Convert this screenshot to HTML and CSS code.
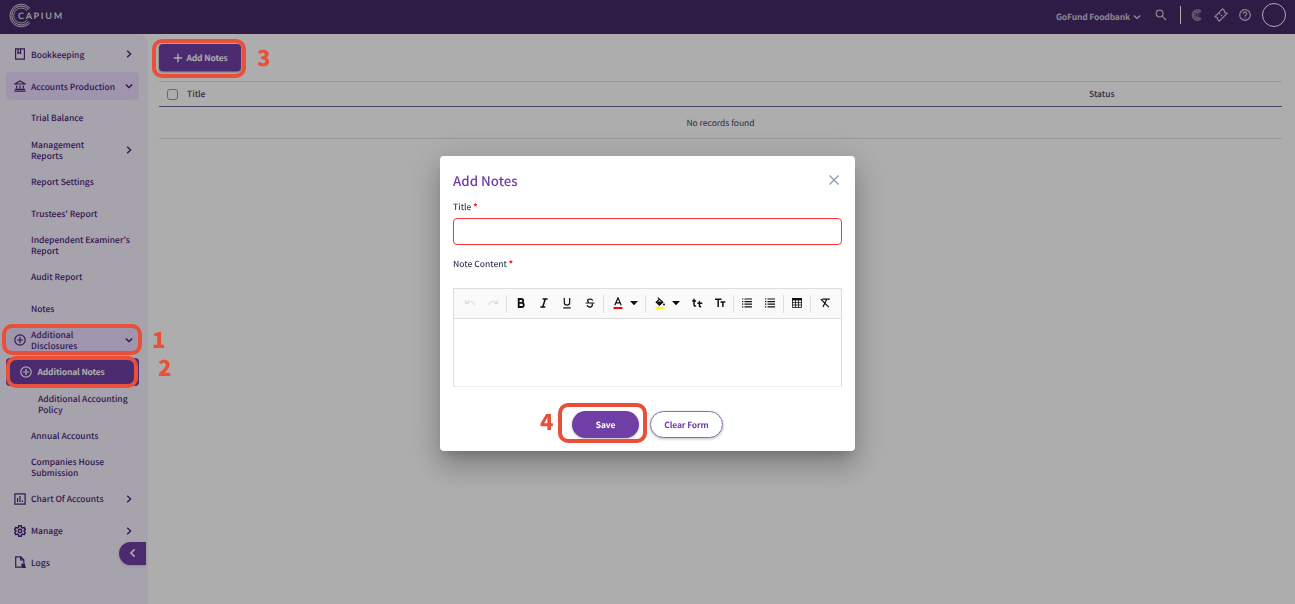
FILE: index.html
```html
<!DOCTYPE html>
<html lang="en">
<head>
    <meta charset="UTF-8">
    <title>Capium - Additional Notes</title>
    <link rel="stylesheet" href="styles.css">
</head>
<body>
    <svg class="defs" width="0" height="0">
        <symbol id="right" viewBox="0 0 10 10"><path d="M3.2 1.8 6.6 5 3.2 8.2"/></symbol>
        <symbol id="down" viewBox="0 0 10 10"><path d="M1.8 3.4 5 6.6 8.2 3.4"/></symbol>
        <symbol id="plus-circle" viewBox="0 0 12 12"><circle cx="6" cy="6" r="5.2"/><path d="M6 3v6M3 6h6"/></symbol>
        <symbol id="caret" viewBox="0 0 10 10"><path d="M1 3h8L5 7.2z"/></symbol>
        <symbol id="list" viewBox="0 0 12 12"><path d="M3.5 2h7.5M3.5 4.6h7.5M3.5 7.2h7.5M3.5 9.8h7.5M1 2h1.3M1 4.6h1.3M1 7.2h1.3M1 9.8h1.3"/></symbol>
    </svg>

    <header class="topbar">
        <div class="logo">
            <svg class="logo-mark" viewBox="0 0 26 26">
                <path d="M21.5 5.2A11.7 11.7 0 1 0 21.5 20.8"/>
                <path d="M20.2 6.7A9.8 9.8 0 1 0 20.2 19.3"/>
                <path d="M18.8 8.2A7.8 7.8 0 1 0 18.8 17.8"/>
                <path class="dotted" d="M20.8 6A10.7 10.7 0 1 0 20.8 20"/>
            </svg>
            <span class="logo-text">CAPIUM</span>
        </div>
        <div class="top-actions">
            <span class="company">GoFund Foodbank</span>
            <svg class="icon company-arrow"><use href="#down"/></svg>
            <svg class="icon search" viewBox="0 0 12 12"><circle cx="4.6" cy="4.6" r="3.4"/><path d="M7.2 7.2 11 11"/></svg>
            <span class="divider"></span>
            <svg class="icon brand" viewBox="0 0 12 12"><path d="M10.4 2.4A5.3 5.3 0 1 0 10.4 9.6"/><path d="M9.4 3.6A3.9 3.9 0 1 0 9.4 8.4"/><path d="M8 4.4A2.3 2.3 0 1 0 8 7.6M6 6h2"/></svg>
            <svg class="icon ticket" viewBox="0 0 14 14"><path d="M8.7.9 10.6 2.8A1.4 1.4 0 0 0 11.5 4.9L13.1 5.3 5.3 13.1 3.4 11.2A1.4 1.4 0 0 0 2.5 9.1L.9 8.7z"/><path d="M5.3 5.3 8.7 8.7" stroke-dasharray="1.4 1"/></svg>
            <svg class="icon help" viewBox="0 0 12 12"><circle cx="6" cy="6" r="5.3"/><path d="M4.3 4.7a1.7 1.7 0 1 1 2.6 1.4C6.2 6.5 6 6.8 6 7.4M6 8.4v1.1"/></svg>
            <span class="avatar"></span>
        </div>
    </header>

    <div class="page">
        <nav class="sidebar">
            <a class="item"><svg class="icon" viewBox="0 0 12 12"><path d="M1.6.9h8.8v10.2H1.6zM4 1v4.4l1.3-1 1.3 1V1"/></svg><span>Bookkeeping</span><svg class="arrow"><use href="#right"/></svg></a>
            <a class="item open"><svg class="icon" viewBox="0 0 12 12"><path d="M.8 4 6 1l5.2 3zM.4 11.2h11.2M.9 9.4h10.2M2.7 5.4v3M6 5.4v3M9.3 5.4v3"/></svg><span>Accounts Production</span><svg class="arrow"><use href="#down"/></svg></a>
            <a class="item sub"><span>Trial Balance</span></a>
            <a class="item sub"><span>Management<br>Reports</span><svg class="arrow"><use href="#right"/></svg></a>
            <a class="item sub"><span>Report Settings</span></a>
            <a class="item sub"><span>Trustees' Report</span></a>
            <a class="item sub"><span>Independent Examiner's<br>Report</span></a>
            <a class="item sub"><span>Audit Report</span></a>
            <a class="item sub"><span>Notes</span></a>
            <a class="item open"><svg class="icon"><use href="#plus-circle"/></svg><span>Additional<br>Disclosures</span><svg class="arrow"><use href="#down"/></svg></a>
            <a class="item selected"><svg class="icon"><use href="#plus-circle"/></svg><span>Additional Notes</span></a>
            <a class="item subsub"><span>Additional Accounting<br>Policy</span></a>
            <a class="item sub"><span>Annual Accounts</span></a>
            <a class="item sub"><span>Companies House<br>Submission</span></a>
            <a class="item"><svg class="icon" viewBox="0 0 12 12"><path d="M.9.9h10.2v10.2H.9zM3.6 5v4M6 3v6M8.4 7.4V9"/></svg><span>Chart Of Accounts</span><svg class="arrow"><use href="#right"/></svg></a>
            <a class="item"><svg class="icon gear" viewBox="0 0 12 12"><path d="M4.8.8h2.4l.4 1.6 1 .6 1.6-.5 1.2 2-1.2 1.1v.9l1.2 1.1-1.2 2-1.6-.5-1 .6-.4 1.6H4.8l-.4-1.6-1-.6-1.6.5-1.2-2 1.2-1.1v-.9L.6 4.5l1.2-2 1.6.5 1-.6z"/><circle cx="6" cy="6" r="1.7"/></svg><span>Manage</span><svg class="arrow"><use href="#right"/></svg></a>
            <a class="item"><svg class="icon" viewBox="0 0 12 12"><path d="M7 11.2H1.7V.8H6.8L9.8 3.8V7M6.6 1v3h3"/><path class="solid" d="M8 8h2.5v2.2l1.3 1.5H8z"/></svg><span>Logs</span></a>
            <button class="collapse"><svg viewBox="0 0 10 10"><path d="M6.6 1.4 3 5l3.6 3.6"/></svg></button>
        </nav>

        <main class="content">
            <button class="add-notes"><svg viewBox="0 0 10 10"><path d="M5 .8v8.4M.8 5h8.4"/></svg><span>Add Notes</span></button>
            <table class="notes">
                <thead>
                    <tr><th class="check"><span class="checkbox"></span></th><th>Title</th><th class="status">Status</th></tr>
                </thead>
                <tbody>
                    <tr><td colspan="3">No records found</td></tr>
                </tbody>
            </table>
        </main>
    </div>

    <div class="overlay">
        <form class="modal">
            <div class="modal-head">
                <h2>Add Notes</h2>
                <svg class="close" viewBox="0 0 12 12"><path d="M1.5 1.5l9 9M10.5 1.5l-9 9"/></svg>
            </div>
            <label>Title <b>*</b></label>
            <input class="title-input" type="text">
            <label>Note Content <b>*</b></label>
            <div class="editor">
                <div class="toolbar">
                    <div class="group">
                        <span class="tool off"><svg viewBox="0 0 12 12"><path d="M1.5 3v3.5H5M1.8 6.2C4 3.8 8.5 3.5 10.8 8"/></svg></span>
                        <span class="tool off"><svg viewBox="0 0 12 12"><path d="M10.5 3v3.5H7M10.2 6.2C8 3.8 3.5 3.5 1.2 8"/></svg></span>
                    </div>
                    <div class="group">
                        <span class="tool"><svg viewBox="0 0 12 12"><path stroke-width="1.8" d="M3.7 2h2.6a1.9 1.9 0 0 1 0 3.8H3.7zM3.7 5.8h3a2.1 2.1 0 0 1 0 4.2h-3z"/></svg></span>
                        <span class="tool"><svg viewBox="0 0 12 12"><path stroke-width="1.5" d="M4.6 2h5M2.3 10h5M7.3 2 4.7 10"/></svg></span>
                        <span class="tool"><svg viewBox="0 0 12 12"><path d="M3.3 1v4.4a2.7 2.7 0 0 0 5.4 0V1M2.3 10.8h7.4"/></svg></span>
                        <span class="tool"><svg viewBox="0 0 12 12"><path d="M8.8 3.6C8 1.5 3.6 1.5 3.6 3.8c0 .8.6 1.3 1.4 1.7M1.5 6h9M7.7 6.8c1.8 1-.1 3.3-1.7 3.3-1.5 0-2.6-.7-2.8-1.9"/></svg></span>
                    </div>
                    <div class="group">
                        <span class="tool color"><svg viewBox="0 0 12 12"><path d="M2.8 8.2 6 .8l3.2 7.4M3.9 5.8h4.2"/><path stroke="#f00" stroke-width="2" d="M1.5 11h9"/></svg></span>
                        <span class="drop"><svg><use href="#caret"/></svg></span>
                    </div>
                    <div class="group">
                        <span class="tool color"><svg viewBox="0 0 12 12"><path d="M3.8.6 8.8 5.2 5.5 8.2 2.2 5.2 5.5 2.2"/><path class="solid" stroke="none" d="M2.2 4.6h6.6L5.5 8.5z"/><circle class="solid" stroke="none" cx="10" cy="7.5" r="1"/><path stroke="#ff0" stroke-width="2" d="M1.5 11h9"/></svg></span>
                        <span class="drop"><svg><use href="#caret"/></svg></span>
                        <span class="tool"><svg viewBox="0 0 12 12"><path stroke-width="1.5" d="M3 1.8v5.7c0 1.2.8 1.7 2.1 1.4M1.2 4h3.9M8.5 4v4.7c0 .9.7 1.2 1.7.9M6.3 6.2h5"/></svg></span>
                        <span class="tool"><svg viewBox="0 0 12 12"><path stroke-width="1.5" d="M1 2.2h6.5M4.2 2.2V10M6.5 5h4.8M8.9 5v5"/></svg></span>
                    </div>
                    <div class="group tight">
                        <span class="tool"><svg><use href="#list"/></svg></span>
                        <span class="tool"><svg><use href="#list"/></svg></span>
                    </div>
                    <div class="group tight">
                        <span class="tool"><svg viewBox="0 0 12 12"><path class="solid" stroke="none" d="M1 1h10v2.4H1z"/><path stroke-width=".8" d="M1.5 3v7.5h9V3M1.5 5.6h9M1.5 8h9M4.5 3v7.5M7.5 3v7.5"/></svg></span>
                    </div>
                    <div class="group tight">
                        <span class="tool clean"><svg viewBox="0 0 12 12"><path d="M3.2 2.1h7.600M7.800 2.100 4 10M1.800 2.100l8 8"/></svg></span>
                    </div>
                </div>
                <div class="edit-area"></div>
            </div>
            <div class="modal-buttons">
                <button type="button" class="save">Save</button>
                <button type="button" class="clear">Clear Form</button>
            </div>
        </form>
    </div>

    <!-- tutorial steps -->
    <div class="mark mark-1"></div><span class="step step-1">1</span>
    <div class="mark mark-2"></div><span class="step step-2">2</span>
    <div class="mark mark-3"></div><span class="step step-3">3</span>
    <div class="mark mark-4"></div><span class="step step-4">4</span>
</body>
</html>
```

FILE: styles.css
```css
* {
    box-sizing: border-box;
}

body {
    margin: 0;
    height: 604px;
    overflow: hidden;
    background: #fff;
    color: #3f3f5e;
    font-family: "Noto Sans CJK JP", "Open Sans", sans-serif;
    font-size: 8.5px;
    font-weight: 500;
    line-height: 11px;
    text-rendering: geometricPrecision;
}

button {
    border: 0;
    padding: 0;
    font: inherit;
    font-weight: 700;
    letter-spacing: -.15px;
    text-rendering: inherit;
}

svg {
    fill: none;
    stroke: currentColor;
    flex: none;
}

.defs {
    position: absolute;
}

.solid {
    fill: currentColor;
}

/* top bar */
.topbar {
    height: 34px;
    padding: 0 9px;
    display: flex;
    align-items: center;
    justify-content: space-between;
    background: #452968;
    color: #cfc6da;
}

.logo {
    display: flex;
    align-items: center;
    margin-top: -3px;
}

.logo-mark {
    width: 25px;
    height: 25px;
}

.logo-mark .dotted {
    stroke-width: 3.5;
    stroke-dasharray: 1 1;
    opacity: .5;
}

.logo-text {
    margin-left: -16px;
    font: 700 9px/12px Lato, sans-serif;
    letter-spacing: 1.7px;
    color: #ddd;
}

.top-actions {
    display: flex;
    align-items: center;
    margin-top: -4px;
}

.top-actions .icon {
    width: 12px;
    height: 12px;
    stroke-width: 1.2;
}

.company {
    font-weight: 700;
    letter-spacing: -.15px;
    padding-top: 4px;
}

.top-actions .company-arrow {
    width: 10px;
    height: 10px;
    margin: 3px 13px 0 2px;
    stroke-width: 1.4;
}

.divider {
    width: 1px;
    height: 18px;
    margin: 0 10px 0 13px;
    background: #fff;
}

.top-actions .brand {
    opacity: .6;
}

.top-actions .ticket {
    width: 14px;
    height: 14px;
    margin: 0 11px;
}

.avatar {
    width: 24px;
    height: 24px;
    margin-left: 11px;
    border: 1.5px solid #fff;
    border-radius: 50%;
}

.page {
    display: flex;
    height: 570px;
}

/* sidebar */
.sidebar {
    width: 147px;
    padding: 6px 8px 0 6px;
    background: #f6f0ff;
    border-top-right-radius: 8px;
    box-shadow: 0 2px 2px #e6e0ee;
    color: #4a2576;
}

.item {
    display: flex;
    align-items: center;
    height: 28.5px;
    margin-bottom: 3.25px;
    padding: 0 5px 0 7.5px;
    border-radius: 4px;
    white-space: nowrap;
}

.item span {
    padding-top: 2px;
}

.item .icon {
    width: 12px;
    height: 12px;
    margin-right: 5.5px;
    stroke-width: 1.2;
}

.item .gear {
    stroke-width: 1.5;
}

.arrow {
    width: 10px;
    height: 10px;
    margin-left: auto;
    stroke-width: 1.4;
}

.item.open {
    background: #ebdcff;
}

.item.sub {
    padding-left: 25px;
}

.item.subsub {
    padding-left: 32px;
}

.item.selected {
    padding-left: 14px;
    background: #6f3fa5;
    color: #fff;
    font-weight: 700;
    letter-spacing: -.15px;
}

.collapse {
    display: block;
    width: 27px;
    height: 23px;
    margin: -38px -7px 0 auto;
    padding: 0;
    border-radius: 12px 0 0 12px;
    background: #6f3fa5;
    color: #fff;
    box-shadow: 0 1px 3px #8885;
}

.collapse svg {
    display: block;
    width: 10px;
    height: 10px;
    margin: 0 auto;
    stroke-width: 1.6;
}

/* list of notes */
.content {
    flex: 1;
    padding: 10px 13px 0 12px;
}

.add-notes {
    display: flex;
    align-items: center;
    justify-content: center;
    gap: 4px;
    width: 82px;
    height: 27px;
    border-radius: 4px;
    background: #6f3fa5;
    color: #fff;
    box-shadow: 0 1px 2px #777;
}

.add-notes span {
    padding-top: 2px;
}

.add-notes svg {
    width: 10px;
    height: 10px;
    stroke-width: 1.4;
}

.notes {
    width: 100%;
    margin-top: 10px;
    border-collapse: collapse;
    table-layout: fixed;
    border-top: 1px solid #e2e2e2;
}

.notes th {
    height: 25px;
    padding: 0;
    text-align: left;
    font-weight: 500;
    border-bottom: 1px solid #6b6b96;
}

.notes .check {
    width: 28px;
    padding: 0 0 0 8px;
}

.notes .status {
    width: 193px;
}

.checkbox {
    display: block;
    width: 11px;
    height: 11px;
    border: 1px solid #999;
    border-radius: 3px;
}

.notes td {
    height: 32px;
    padding: 2px 0 0;
    text-align: center;
    font-weight: 400;
    border-bottom: 1px solid #e2e2e2;
}

/* dialog */
.overlay {
    position: fixed;
    inset: 0;
    display: flex;
    align-items: center;
    justify-content: center;
    background: rgba(0, 0, 0, .32);
}

.modal {
    width: 415px;
    height: 295px;
    margin-top: 3px;
    padding: 15px 13px 0;
    border-radius: 4px;
    background: #fff;
    box-shadow: 0 8px 11px -5px #0003, 0 17px 27px 2px #00000024, 0 6px 33px 6px #0000001f;
}

.modal-head {
    display: flex;
    align-items: center;
    justify-content: space-between;
    height: 18px;
    margin-bottom: 12px;
    padding-right: 2px;
}

.modal h2 {
    margin: 0;
    font-size: 13.3px;
    font-weight: 500;
    color: #6f3fa5;
}

.close {
    width: 12px;
    height: 12px;
    color: #8c9bb5;
    stroke-width: 1.3;
}

.modal label {
    display: block;
    height: 12px;
    padding-top: 1px;
}

.modal label b {
    color: #f00;
}

.title-input {
    display: block;
    width: 389px;
    height: 27px;
    margin: 5px 0 13px;
    border: 1px solid #f33;
    border-radius: 4px;
}

.editor {
    height: 99px;
    margin-top: 18px;
    border: 1px solid #ddd;
    border-bottom-color: #eee;
}

.toolbar {
    display: flex;
    align-items: center;
    height: 30px;
    background: #fafafa;
    border-bottom: 1px solid #ddd;
    color: #111;
}

.group {
    display: flex;
    align-items: center;
    height: 18px;
    padding: 0 2px;
    border-right: 1px solid #e0e0e0;
}

.group:first-child {
    padding-left: 4px;
}

.group:last-child {
    border: 0;
}

.group.tight {
    padding: 0 1.5px;
}

.tool {
    display: flex;
    justify-content: center;
    width: 23px;
    padding-bottom: 2px;
}

.tool.color {
    padding-left: 1px;
}

.tool.clean {
    padding-left: 2px;
}

.tool svg {
    width: 12px;
    height: 12px;
    stroke-width: 1.2;
}

.tool.off {
    color: #ddd;
}

.drop {
    display: flex;
    width: 14px;
    padding-bottom: 2px;
}

.drop svg {
    width: 10px;
    height: 10px;
    fill: currentColor;
    stroke: none;
}

.modal-buttons {
    display: flex;
    justify-content: center;
    gap: 11px;
    margin-top: 24px;
}

.modal-buttons button {
    height: 27px;
    padding-top: 2px;
    border-radius: 14px;
    box-shadow: 0 1px 3px #0004;
}

.modal-buttons .save {
    width: 67px;
    background: #6f3fa5;
    color: #fff;
}

.modal-buttons .clear {
    width: 73px;
    background: #fff;
    border: 1px solid #8e69b8;
    color: #6f3fa5;
}

/* step markers drawn over the page */
.mark {
    position: absolute;
    border: 4px solid #e8503a;
    border-radius: 10px;
}

.step {
    position: absolute;
    color: #e8503a;
    font-size: 22px;
    font-weight: 900;
    line-height: 24px;
}

.mark-1 { left: 2px; top: 324px; width: 140px; height: 31px; }
.mark-2 { left: 6px; top: 356px; width: 132px; height: 32px; }
.mark-3 { left: 152px; top: 39px; width: 94px; height: 39px; }
.mark-4 { left: 558px; top: 403px; width: 89px; height: 40px; }
.step-1 { left: 152px; top: 327px; }
.step-2 { left: 158px; top: 355px; }
.step-3 { left: 257px; top: 45px; }
.step-4 { left: 540px; top: 409px; }
```
